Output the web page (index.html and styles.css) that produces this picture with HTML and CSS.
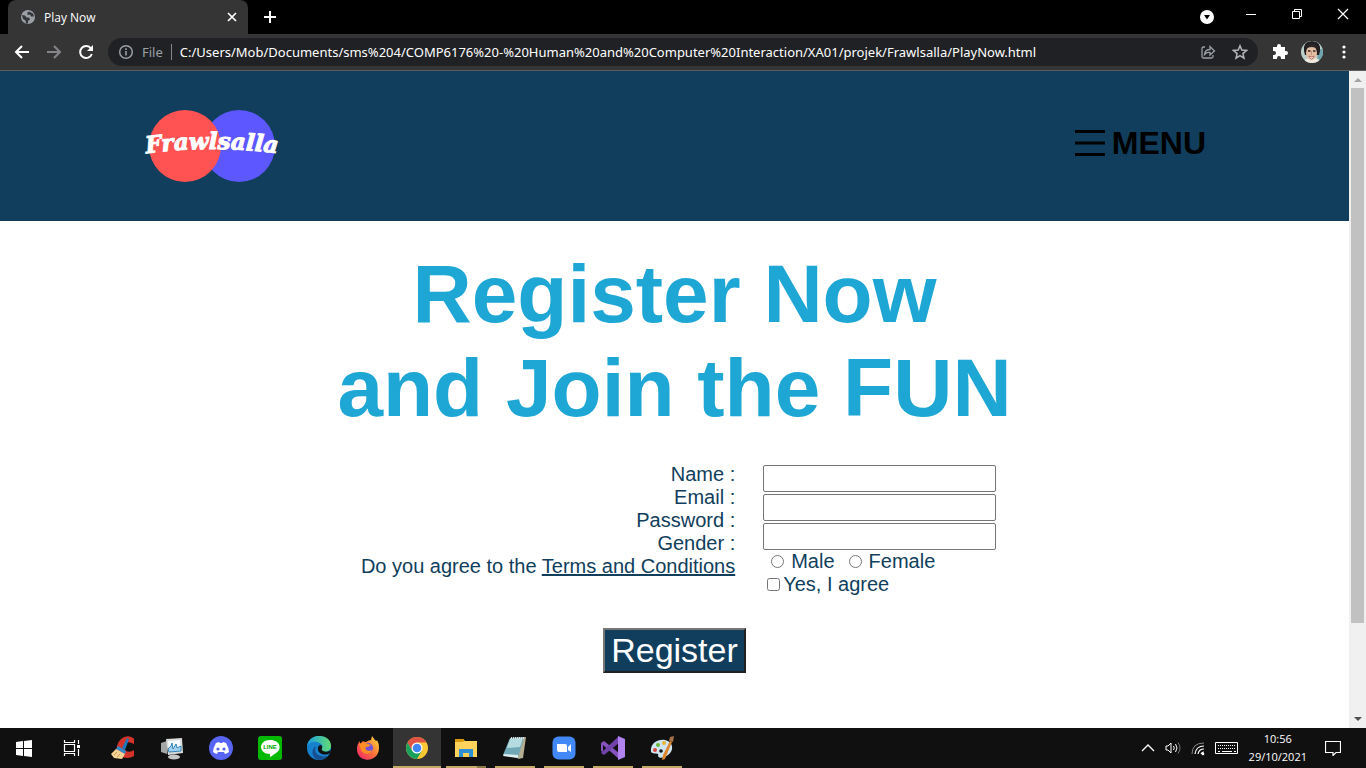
FILE: index.html
```html
<!DOCTYPE html>
<html lang="en">
<head>
<meta charset="utf-8">
<title>Play Now</title>
<link rel="stylesheet" href="styles.css">
</head>
<body>
<div class="tabs">
  <div class="tab">
    <svg class="i16" viewBox="0 0 16 16"><circle cx="8" cy="8" r="7" fill="#9aa0a6"/><path d="M2 6l3 .5 1.500 2H9l1 2-2 1.500v2.500H6l-.5-3L3 10zM9 2.500L7 4l1 2 2-.5 1 2h3l-1-3z" fill="#35363a"/></svg>
    <span class="tab-name">Play Now</span>
    <button class="bare i16" aria-label="Close tab"><svg viewBox="0 0 16 16"><path d="M4 4l8 8M12 4l-8 8" stroke="#fff" stroke-width="1.700"/></svg></button>
  </div>
  <button class="bare newtab i16" aria-label="New tab"><svg viewBox="0 0 16 16"><path d="M8 2v12M2 8h12" stroke="#fff" stroke-width="2"/></svg></button>
  <div class="wincontrols">
    <button class="bare" aria-label="Search tabs"><svg class="i16" viewBox="0 0 16 16"><circle cx="8" cy="9" r="7" fill="#fff"/><path d="M5 7h6l-3 4.500z" fill="#000"/></svg></button>
    <button class="bare" aria-label="Minimize"><svg class="i16" viewBox="0 0 16 16"><path d="M3 8.500h10" stroke="#fff"/></svg></button>
    <button class="bare" aria-label="Restore"><svg class="i16" viewBox="0 0 16 16"><path d="M3.500 5.500h7v7h-7zM5.500 5.500v-2h7v7h-2" fill="none" stroke="#fff"/></svg></button>
    <button class="bare" aria-label="Close"><svg class="i16" viewBox="0 0 16 16"><path d="M3 3l10 10M13 3L3 13" stroke="#fff" stroke-width="1.200"/></svg></button>
  </div>
</div>
<div class="toolbar">
  <button class="bare" aria-label="Back"><svg class="i16" viewBox="0 0 16 16"><path d="M15 8H2M8 2L2 8l6 6" fill="none" stroke="#fff" stroke-width="2"/></svg></button>
  <button class="bare" aria-label="Forward"><svg class="i16" viewBox="0 0 16 16"><path d="M1 8h13M8 2l6 6-6 6" fill="none" stroke="#85868a" stroke-width="2"/></svg></button>
  <button class="bare" aria-label="Reload"><svg class="i16" viewBox="0 0 16 16"><path d="M13 4.500A6 6 0 1 0 13.800 10" fill="none" stroke="#fff" stroke-width="2"/><path d="M15 1v6H9z" fill="#fff"/></svg></button>
  <div class="address">
    <svg class="i16" viewBox="0 0 16 16"><circle cx="8" cy="8" r="6.300" fill="none" stroke="#9aa0a6" stroke-width="1.500"/><path d="M8 7v4.500M8 4.300v1.600" stroke="#9aa0a6" stroke-width="1.600"/></svg>
    <span class="scheme">File</span>
    <span class="url">C:/Users/Mob/Documents/sms%204/COMP6176%20-%20Human%20and%20Computer%20Interaction/XA01/projek/Frawlsalla/PlayNow.html</span>
    <button class="bare" aria-label="Share"><svg class="i16" viewBox="0 0 16 16"><path d="M5 3H3.500Q2 3 2 4.500v8Q2 14 3.500 14h8q1.500 0 1.500-1.500V11M4.500 10.500Q5 5.500 10 5.500V2.500l4.500 4.500L10 11V8.500Q6.500 8 4.500 10.500z" fill="none" stroke="#9aa0a6" stroke-width="1.300"/></svg></button>
    <button class="bare" aria-label="Bookmark"><svg class="i16" viewBox="0 0 16 16"><path d="M8 1.800l1.800 4.300 4.700.4-3.600 3.100 1.100 4.600L8 11.700l-4 2.500 1.100-4.600L1.500 6.500l4.700-.4z" fill="none" stroke="#b4b7bb" stroke-width="1.500"/></svg></button>
  </div>
  <button class="bare ext" aria-label="Extensions"><svg class="i16" viewBox="0 0 16 16"><path d="M1 3h4V2a2 2 0 0 1 4 0v1h4v4h1a2 2 0 0 1 0 4h-1v4H9v-1a2 2 0 0 0-4 0v1H1v-4h1a2 2 0 0 0 0-4H1z" fill="#fff"/></svg></button>
  <button class="bare" aria-label="Profile"><svg class="avatar" viewBox="0 0 22 22"><clipPath id="av"><circle cx="11" cy="11" r="11"/></clipPath><g clip-path="url(#av)"><path fill="#b9cfca" d="M0 0h22v22H0z"/><path fill="#6da4ad" d="M17 8h5v14h-6z"/><path fill="#eee8df" d="M2 22q1-5 9-5t9 5z"/><path fill="#221e20" d="M3 10Q2 0 11 0t8 10l-1 4H4z"/><ellipse cx="10.500" cy="12" rx="5.500" ry="7" fill="#e3bea0"/><path d="M4 8q7-4 13 0-1-6-6-6T4 8z" fill="#29262a"/><path d="M7 10h2.500M12 10h2.500" stroke="#342524" stroke-width="1.300"/><path d="M10.500 10v4" stroke="#c88f75"/><path d="M8 15q3 2 5 0-1 3-2.500 3T8 15z" fill="#fff" stroke="#a34e45" stroke-width=".7"/></g></svg></button>
  <button class="bare" aria-label="More"><svg class="i16" viewBox="0 0 16 16" fill="#fff"><circle cx="8" cy="3" r="1.600"/><circle cx="8" cy="8" r="1.600"/><circle cx="8" cy="13" r="1.600"/></svg></button>
</div>
<div class="viewport">
  <div class="page">
    <header class="site-head">
      <a href="#" aria-label="Frawlsalla"><svg class="logo" viewBox="0 0 142 76"><circle cx="98" cy="38" r="36" fill="#5c57ff"/><circle cx="44" cy="38" r="36" fill="#ff5353"/><path id="arc" d="M1 46Q70 36 141 46" fill="none"/><text class="logo-text"><textPath href="#arc" startOffset="50%" text-anchor="middle">Frawlsalla</textPath></text></svg></a>
      <button class="bare menu"><svg class="burger" viewBox="0 0 30 26"><path d="M0 1.500h30M0 13h30M0 24.500h30" stroke="#000" stroke-width="3"/></svg>MENU</button>
    </header>
    <main>
      <h1>Register Now<br>and Join the FUN</h1>
      <form>
        <div class="fields">
          <div class="labels">
            <label for="name">Name :</label>
            <label for="email">Email :</label>
            <label for="pass">Password :</label>
            <span id="gender">Gender :</span>
            <span>Do you agree to the <a href="#">Terms and Conditions</a></span>
          </div>
          <div class="controls">
            <input class="text" id="name" type="text">
            <input class="text" id="email" type="email">
            <input class="text" id="pass" type="password">
            <div class="radios" role="radiogroup" aria-labelledby="gender">
              <label><input type="radio" name="g">Male</label>
              <label><input type="radio" name="g">Female</label>
            </div>
            <label class="agree"><input type="checkbox">Yes, I agree</label>
          </div>
        </div>
        <button class="register" type="button">Register</button>
      </form>
    </main>
  </div>
  <div class="scroll">
    <svg class="arrow" viewBox="0 0 17 17"><path d="M5 11h8L9 7z" fill="#a3a3a3"/></svg>
    <div class="thumb"></div>
    <svg class="arrow" viewBox="0 0 17 17"><path d="M5 6h8l-4 4z" fill="#505050"/></svg>
  </div>
</div>
<nav class="taskbar" aria-label="Taskbar">
  <button class="bare slot" aria-label="Start"><svg viewBox="0 0 24 24" fill="#fff"><path d="M4 6l7-1v7H4zM12 5l8-1v8h-8zM4 13h7v7l-7-1zM12 13h8v8l-8-1z"/></svg></button>
  <button class="bare slot view" aria-label="Task View"><svg viewBox="0 0 24 24" fill="none" stroke="#fff"><path d="M4.500 4v2.500h10V4M4.500 20v-2.500h10V20M4.500 8.500h10v7h-10zM18.500 4v4M18.500 13v7" stroke-width="1.200"/><path d="M17 9h3v3h-3z" fill="#fff" stroke="none"/></svg></button>
  <button class="bare slot" aria-label="CCleaner"><svg viewBox="0 0 24 24"><path d="M23 8V2.500Q16-2 10 3 5 8 6 14q2 8 10 8 4 0 7-2v-6q-4 3-8 1-3-2-2-6 3-5 10-1z" fill="#d4332a"/><path d="M16 2l2 1-4 11-3-2z" fill="#1c78bd"/><path d="M7 10l8 5-1 3-9-5z" fill="#3189c8"/><path d="M5 13l9 5-3 5-8-1-3-4z" fill="#f3d396"/><path d="M3 19l3-3M6 21l3-3" stroke="#c89554"/></svg></button>
  <button class="bare slot" aria-label="Performance Monitor"><svg viewBox="0 0 24 24"><path d="M1 7l6-2v13l-6-2z" fill="#a3a7a6"/><path d="M6 3l16-1 1 15-15 2z" fill="#d7dad9"/><path d="M8 5l12-1 1 11-12 1z" fill="#f5fbff"/><path d="M8 13l3-3 1-3 1 6 3-5 1 4 4-2v5l-12 1z" fill="#a4d2f1" stroke="#3483b8"/><ellipse cx="14" cy="21" rx="6" ry="2.500" fill="#c5c8c7"/></svg></button>
  <button class="bare slot" aria-label="Discord"><svg viewBox="0 0 24 24"><circle cx="12" cy="12" r="12" fill="#5865f2"/><path d="M7 7l3-1 .8 1h2.400l.8-1 3 1q3 5 3 9-2 1.500-4 2l-1-2h-6l-1 2q-2-.5-4-2 0-4 3-9z" fill="#fff"/><circle cx="9" cy="13" r="1.600" fill="#5865f2"/><circle cx="15" cy="13" r="1.600" fill="#5865f2"/></svg></button>
  <button class="bare slot" aria-label="LINE"><svg viewBox="0 0 24 24"><rect width="24" height="24" rx="3" fill="#00b900"/><path d="M12 4c11 0 12 10 6 13q-4 3-6 4v-3C0 18 0 4 12 4z" fill="#fff"/><text x="12" y="13" text-anchor="middle" class="line-text">LINE</text></svg></button>
  <button class="bare slot" aria-label="Edge"><svg viewBox="0 0 24 24"><defs><linearGradient id="eg"><stop stop-color="#1b9de2"/><stop offset="1" stop-color="#62dc72"/></linearGradient></defs><circle cx="12" cy="12" r="12" fill="#1681ce"/><path d="M0 10C2-4 24-3 24 10c0 5-6 7-9 5-3-3 2-3 0-6C11 4 3 5 0 10z" fill="url(#eg)"/><path d="M9 10c-3 6 2 12 12 10-3 3-7 4-10 4-7-3-7-11-2-14z" fill="#174f91"/><path d="M14 9c-4 0-4 6-1 8 3 2 7 2 10 0l1-3q-4 3-8 1c-3-2 1-3-2-6z" fill="#111"/></svg></button>
  <button class="bare slot" aria-label="Firefox"><svg viewBox="0 0 24 24"><defs><linearGradient id="fg" x1="1" y1="0" x2="0" y2="1"><stop stop-color="#ffe33b"/><stop offset=".5" stop-color="#ff7139"/><stop offset="1" stop-color="#f51d73"/></linearGradient></defs><path d="M16 0q2 3 4 5 1 0 1-1 2 3 2 8c0 15-22 16-22 1q0-5 3-8v3l3-3q1 1 3 1 3-2 5-2z" fill="url(#fg)"/><circle cx="12" cy="12" r="5" fill="#7351dd"/><path d="M3 8q5-3 9 0l3 1q-2 2-5 2c-2 3 3 5 6 3-2 6-9 4-11 0z" fill="#ff8e26"/></svg></button>
  <button class="bare slot active" aria-label="Chrome"><svg viewBox="0 0 24 24"><circle cx="12" cy="12" r="11" fill="#fcc934"/><path d="M2.500 6.500A11 11 0 0 1 21.500 6.500H12L7.200 14.800z" fill="#e05246"/><path d="M2.500 6.500A11 11 0 0 0 12 23l4.800-8.200H7.200z" fill="#19a05d"/><circle cx="12" cy="12" r="5.500" fill="#fff"/><circle cx="12" cy="12" r="4.300" fill="#4285f4"/></svg></button>
  <button class="bare slot open multi" aria-label="File Explorer"><svg viewBox="0 0 24 24"><path d="M1 3h8l2 2h12v16H1z" fill="#ffd35b"/><path d="M1 3h9v2l-1 1H1z" fill="#d99a10"/><path d="M5 21v-8h14v8h-4v-4H9v4z" fill="#2f8fd5"/></svg></button>
  <button class="bare slot open" aria-label="Notepad"><svg viewBox="0 0 24 24"><path d="M8 2l15-1-3 21-5 1z" fill="#b5ad92"/><path d="M7 2l14-1-6 21L0 19z" fill="#70a9b5"/><path d="M7 3l13-1-3 9-13 1z" fill="#b5dce0"/><path d="M1 18l14 1v3L0 20z" fill="#ddeef0"/><path d="M8 2h13" stroke="#ddd" stroke-width="2" stroke-dasharray="1 1"/></svg></button>
  <button class="bare slot open" aria-label="Zoom"><svg viewBox="0 0 24 24"><rect x=".5" y=".5" width="23" height="23" rx="6" fill="#4388f7"/><path d="M5 8h8q2 0 2 2v6H7q-2 0-2-2zM16 11l3-3v8l-3-2z" fill="#fff"/></svg></button>
  <button class="bare slot open" aria-label="Visual Studio"><svg viewBox="0 0 24 24"><path d="M0 7l3-2 15 12v6L2 9v7l-2-1z" fill="#8652bd"/><path d="M0 17l3 2L18 7V0L2 15z" fill="#7042aa"/><path d="M17 0l7 3v18l-7 3z" fill="#b183ee"/></svg></button>
  <button class="bare slot open" aria-label="Paint"><svg viewBox="0 0 24 24"><path d="M1 16C0 7 8 3 15 4c9 2 9 11 3 15-4 3-9 4-10 1 2-4-5-1-7-4z" fill="#cfe6f1"/><circle cx="5" cy="14" r="2" fill="#da493c"/><circle cx="8" cy="9" r="2" fill="#68b63c"/><circle cx="14" cy="7" r="2" fill="#e8b52f"/><circle cx="11" cy="15" r="1.800" fill="#111"/><path d="M20 5l2 1-7 17-3 1 1-5z" fill="#dc8630"/><path d="M19 5l1-4 4-1-1 6z" fill="#a77145"/></svg></button>
  <div class="tray">
    <svg class="i16" viewBox="0 0 16 16"><path d="M2 11l6-6 6 6" fill="none" stroke="#fff" stroke-width="1.300"/></svg>
    <svg class="i16" viewBox="0 0 16 16" fill="none" stroke="#fff"><path d="M1 6h2l3-3v10l-3-3H1zM8.500 6q1.500 2 0 4M10.500 4q3 4 0 8"/><path d="M13 2.500q4 5.500 0 11" stroke="#777"/></svg>
    <svg class="i16" viewBox="0 0 16 16" fill="none"><path d="M2 14Q2 3 14 3" stroke="#888"/><path d="M5 14Q6 6 14 6M8 14q1-5 6-5M11 14q1-2 3-2" stroke="#fff" stroke-width="1.200"/><circle cx="13" cy="14" r="1.300" fill="#fff"/></svg>
    <svg class="keys" viewBox="0 0 24 16"><path d="M.5 2.500h22v11H.5z" fill="none" stroke="#fff"/><path d="M3 5.500h18M3 8.500h18" stroke="#fff" stroke-dasharray="1 1"/><path d="M3 11.500h2M7 11.500h10M19 11.500h2" stroke="#fff"/></svg>
    <time class="clock">10:56<br>29/10/2021</time>
    <svg class="i16" viewBox="0 0 16 16"><path d="M.5 1.500h15v11H11l-3 3v-3H.5z" fill="none" stroke="#fff" stroke-width="1.200"/></svg>
  </div>
</nav>
</body>
</html>
```
FILE: styles.css
```css
* { box-sizing: border-box; }
body {
  margin: 0;
  height: 100vh;
  display: flex;
  flex-direction: column;
  overflow: hidden;
  background: #fff;
  font-family: "Liberation Sans", Arial, sans-serif;
}
svg { display: block; flex: none; }
.bare { border: 0; padding: 0; background: none; flex: none; }
.i16 { width: 16px; height: 16px; }

/* Browser chrome */
.tabs {
  height: 34px;
  flex: none;
  display: flex;
  padding-left: 8px;
  background: #000;
  color: #fff;
  font: 12px "Open Sans", sans-serif;
}
.tab {
  width: 240px;
  display: flex;
  align-items: center;
  gap: 8px;
  padding: 0 8px 0 12px;
  border-radius: 8px 8px 0 0;
  background: #353535;
}
.tab-name { flex: 1; }
.newtab { align-self: center; margin-left: 14px; }
.wincontrols { margin-left: auto; display: flex; gap: 30px; padding: 6px 15px 12px 0; }
.wincontrols .bare:first-child { margin-right: -2px; padding-top: 2px; }
.toolbar {
  height: 37px;
  flex: none;
  display: flex;
  align-items: center;
  gap: 16px;
  padding: 0 14px;
  background: #353535;
  border-bottom: 1px solid #5d5d5f;
}
.address {
  flex: 1;
  min-width: 0;
  height: 28px;
  display: flex;
  align-items: center;
  gap: 8px;
  margin-left: -2px;
  padding: 0 10px;
  border-radius: 14px;
  background: #202124;
  color: #fff;
  font: 13px "Noto Sans", sans-serif;
}
.address .bare + .bare { margin-left: 8px; }
.scheme { color: #9aa0a6; padding-right: 8px; border-right: 1px solid #85868a; line-height: 16px; }
.url { flex: 1; min-width: 0; overflow: hidden; white-space: nowrap; }
.ext { margin-left: -2px; }
.avatar { width: 22px; height: 22px; margin: 0 -3px; }

/* Page */
.viewport { flex: 1; min-height: 0; display: flex; }
.page { flex: 1; }
.site-head {
  height: 150px;
  display: flex;
  align-items: center;
  justify-content: space-between;
  padding: 0 143px 0 141px;
  background: #103e5c;
}
.logo { width: 142px; height: 76px; overflow: visible; }
.logo-text { font: italic bold 23px "DejaVu Serif", serif; fill: #fff; stroke: #fff; stroke-width: 1px; }
.menu {
  display: flex;
  align-items: center;
  gap: 7px;
  padding-bottom: 6px;
  font: bold 32px "Liberation Sans", Arial, sans-serif;
  color: #000;
}
.burger { width: 30px; height: 26px; }
main { padding-top: 26px; color: #103e5c; font-size: 20px; line-height: 23px; }
h1 {
  margin: 0;
  color: #1ea7d5;
  font-size: 82px;
  line-height: 94px;
  text-align: center;
}
form { padding-top: 28px; }
.fields { display: grid; grid-template-columns: 54.5% 1fr; column-gap: 28px; }
.labels { display: flex; flex-direction: column; align-items: flex-end; }
.labels a { color: inherit; }
.controls { display: flex; flex-direction: column; align-items: flex-start; padding-top: 2px; }
.text {
  width: 233px;
  height: 27px;
  margin-bottom: 2px;
  border: 1px solid #767676;
  border-radius: 2px;
  background: #fff;
}
.text:nth-of-type(3) { margin-bottom: 0; }
.radios { display: flex; gap: 14px; padding-left: 8px; }
.controls label { display: flex; align-items: center; }
.controls label input { width: 13px; height: 13px; margin: 0; }
.radios label { gap: 7px; }
.controls .agree { gap: 3px; padding-left: 4px; }
.register {
  display: block;
  margin: 32px auto 0;
  padding: 1px 6px;
  border: 2px solid;
  border-color: #767676 #212121 #212121 #767676;
  background: #103e5c;
  color: #fff;
  font: 34px "Liberation Sans", Arial, sans-serif;
}
.scroll { width: 17px; display: flex; flex-direction: column; background: #f0f0f0; }
.arrow { width: 17px; height: 17px; }
.thumb { height: 81.5%; flex: none; margin: 0 2px; background: #c1c1c1; }
.thumb + .arrow { margin-top: auto; }

/* Desktop taskbar */
.taskbar { height: 40px; flex: none; display: flex; gap: 1px; background: #101010; }
.slot { width: 48px; display: flex; justify-content: center; align-items: center; border-bottom: 2px solid transparent; padding-top: 2px; }
.slot svg { width: 24px; height: 24px; }
.view { margin-right: 2px; margin-left: -1px; }
.active { background: #343434; border-color: #c3aa67; }
.open { background: linear-gradient(#c3aa67, #c3aa67) center bottom / 40px 2px no-repeat border-box; }
.multi { background: linear-gradient(90deg, #c3aa67 31px, #8b7947 31px) center bottom / 40px 2px no-repeat border-box; }
.tray { margin-left: auto; display: flex; align-items: center; gap: 9px; padding-right: 25px; color: #fff; }
.keys { width: 24px; height: 16px; }
.clock { font: 11px/18px "Open Sans", sans-serif; text-align: center; padding: 0 9px 0 1px; }
.line-text { font: bold 6px "Liberation Sans", sans-serif; fill: #00a800; }
```
